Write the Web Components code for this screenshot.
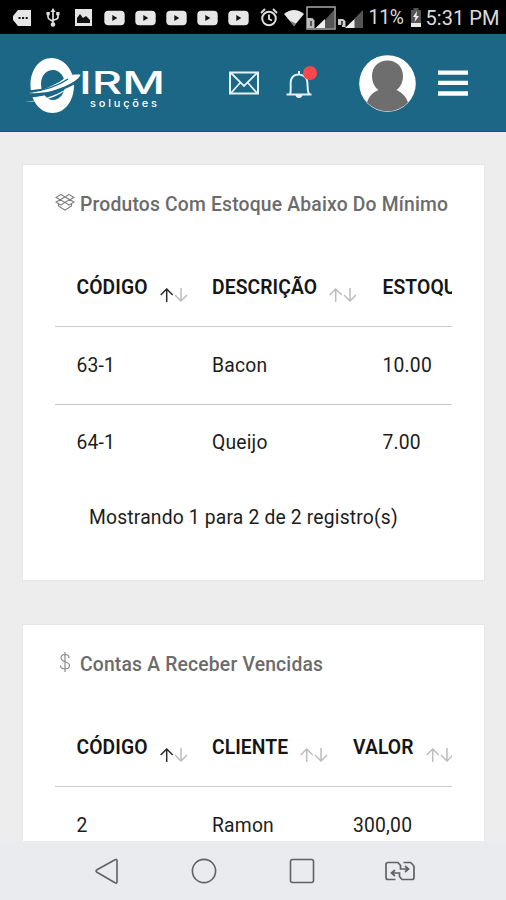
<!DOCTYPE html>
<html lang="pt-BR">
<head>
<meta charset="utf-8">
<title>IRM Soluções</title>
<style>
html,body{margin:0;height:100%}
body{background:#ededed;overflow:hidden;font-family:Roboto,"Liberation Sans",sans-serif;color:#1c1c1c}
</style>
</head>
<body>
<irm-app></irm-app>
<script>
const define=(name,html,setup)=>customElements.define(name,class extends HTMLElement{
  connectedCallback(){
    if(this.shadowRoot)return;
    const t=document.createElement('template');
    t.innerHTML=html;
    this.attachShadow({mode:'open'}).append(t.content.cloneNode(true));
    if(setup)setup(this,this.shadowRoot);
  }
});

const video='<svg width="21" height="16" viewBox="0 0 21 16"><rect x=".3" y=".8" width="20.4" height="14.4" rx="4" fill="#e6e6e6"/><path d="M8.3 5v6l5-3z" fill="#111"/></svg>';
define('status-bar',`<style>
:host{display:flex;align-items:center;height:34px;background:#000;color:#dcdcdc;box-sizing:border-box;padding:1px 0 0 13px;font-size:20px;white-space:nowrap}
svg{display:block;flex:none}
.videos{display:flex;gap:9.9px;margin-left:12px}
.pct{margin-left:6px;width:41px;font-size:19.3px;letter-spacing:-.2px}
.time{margin-left:4px;letter-spacing:.05px}
</style>
<svg width="18" height="16" viewBox="0 0 18 16"><path d="M5 0h13v16H5L0 10V6z" fill="#e6e6e6"/><path d="M5.500 7h2v2h-2zm3.600 0h2v2h-2zm3.600 0h2v2h-2z" fill="#111"/></svg>
<svg style="margin-left:15px" width="14" height="19" viewBox="0 0 14 19" fill="none" stroke="#ddd" stroke-width="1.700"><path d="M7 2v14M2 5v4c0 3 3 2.500 5 4.500M12 5v4c0 3-3 2-5 3.500"/><path d="M4.500 4L7 0l2.500 4zM.5 4h3.300v3.300H.5zM10.200 4h3.300v3.300h-3.300z" fill="#ddd" stroke="none"/><circle cx="7" cy="16.500" r="1.500" fill="#ddd"/></svg>
<svg style="margin-left:15px" width="17" height="17" viewBox="0 0 17 17"><path d="M0 0h17v17H0z" fill="#e6e6e6"/><path d="M2 14V9l3-4 3 4 3-2 4 4v3z" fill="#111"/></svg>
<div class="videos">${video.repeat(5)}</div>
<svg style="margin-left:11px" width="18" height="19" viewBox="0 0 18 19" fill="none" stroke="#ddd"><circle cx="9" cy="10.500" r="6.800" stroke-width="2"/><path d="M9 6.500v4.500l3 1.500M1 5l4-4M17 5l-4-4" stroke-width="1.900"/></svg>
<svg style="margin-left:6px" width="20" height="16" viewBox="0 0 20 16"><path d="M0 4Q10-4 20 4L10 16z" fill="#e9e9e9"/><path d="M5.500 10.500L10 16l2-2.500z" fill="#777"/></svg>
<svg style="margin-left:2px" width="30" height="24" viewBox="0 0 30 24"><path d="M1 1h28v22H1z" fill="none" stroke="#a9a9a9" stroke-width="1.500"/><path d="M1 12h5.500l2 2.500V22H1z" fill="#bbb"/><path d="M5 15v5" stroke="#333" stroke-width="1.500"/><path d="M28 4v18h-9V14z" fill="#555"/><path d="M9.500 22l9.500-9v9z" fill="#eee"/></svg>
<svg style="margin-left:2px;margin-right:-2px" width="27" height="24" viewBox="0 0 27 24"><path d="M0 13h5l2.500 2V21H4v-2H0z" fill="#ccc"/><path d="M4 15v4" stroke="#222" stroke-width="1.500"/><path d="M25 4v18h-9V13z" fill="#555"/><path d="M7 22l9.500-9v9z" fill="#eee"/></svg>
<span class="pct">11%</span>
<svg width="12" height="19" viewBox="0 0 12 19"><path d="M3.500 0h5v2H11v17H1V2h2.500z" fill="#555"/><path d="M1 15h10v4H1z" fill="#e8e8e8"/><path d="M7 3L3 9h2.500L4.500 14 9 8H6.500z" fill="#eee"/></svg>
<span class="time">5:31 PM</span>`);

define('irm-logo',`<style>:host{display:block;width:142px;height:58px}svg{display:block}text{fill:#fff}</style>
<svg width="142" height="58" viewBox="24 56 142 58">
<path fill-rule="evenodd" fill="#fff" d="M51.500 58C63 58 74 69 74 85S65 113 52.500 113 30.500 101 30.500 85 40 58 51.500 58zM53 70c-7 0-12 6-12 14s5 16 12 16 12-7 12-15-5-15-12-15z"/>
<path d="M28 94C44 93 63 88 80 77" fill="none" stroke="#1b6785" stroke-width="7"/>
<path fill="#fff" d="M29 93C41 91 59 84 66 77c5-3 10-2.500 14.500-2.500-1 3-4 6-11 9.500C56 91 42 94 29 93z"/>
<path d="M31 92C45 90 58 86 68 79" fill="none" stroke="#1b6785" stroke-width="1.500"/>
<path fill="#fff" d="M24 102c14-1 32-6 44-14-9 9-27 14-44 14z"/>
<text x="79" y="94" font-family="Inter,sans-serif" font-size="31.500" font-weight="500" textLength="86" lengthAdjust="spacingAndGlyphs">IRM</text>
<text x="90" y="107" font-family="Inter,sans-serif" font-size="11" font-weight="500" textLength="67" lengthAdjust="spacing">soluções</text>
</svg>`);

define('app-header',`<style>
:host{display:flex;align-items:flex-start;height:98px;background:#1b6785;box-sizing:border-box;padding-left:24px;border-bottom:1.5px solid #125474}
svg{display:block;flex:none}
irm-logo{margin-top:22px;flex:none}
.bell{position:relative;margin:36px 0 0 27px}
.dot{position:absolute;left:17px;top:-4px;width:14px;height:14px;border-radius:50%;background:#fb474b}
</style>
<irm-logo></irm-logo>
<svg style="margin:37px 0 0 63px" width="30" height="24" viewBox="0 0 30 24" fill="none" stroke="#e3f2f5" stroke-width="2"><path d="M1 1.500h28v21H1z"/><path d="M2 2l13 13L28 2M2 22l9-10M28 22l-9-10" stroke-width="1.800"/></svg>
<div class="bell"><svg width="26" height="28" viewBox="0 0 26 28" fill="none" stroke="#e3f2f5" stroke-width="2"><path d="M.5 24.500h25M4 24c1.500-3 0-10 1-14 1-3.500 4-5.500 7.500-5.500S20 6.500 21 10c1 4 0 11 2 14M13 4V1"/><path d="M9.500 25h7Q16 28 13 28t-3.500-3z" fill="#e3f2f5" stroke="none"/></svg><span class="dot"></span></div>
<svg style="margin:21px 0 0 47px" width="57" height="57" viewBox="0 0 57 57"><circle cx="28.500" cy="28.500" r="28.300" fill="#fff"/><path fill="#6e6e6e" d="M28.500 5.500C38 5.500 44 12.500 44 21c0 6-2.500 11-6.500 14 5.500 2.500 9.500 6.500 11.500 12.500A28.300 28.300 0 0 1 8 47.500C10 41 14 37.500 19.500 35 15.500 32 13 27 13 21 13 12.500 19 5.500 28.500 5.500z"/></svg>
<svg style="margin:36px 0 0 22px" width="30" height="27" viewBox="0 0 30 27" fill="#fff"><path d="M0 .5h30v4.300H0zm0 10.300h30v4.300H0zM0 21.200h30v4.600H0z"/></svg>`);

define('sort-arrows',`<style>:host{display:block;width:28px;height:14px;margin:14px 0 0 12px;flex:none}svg{display:block}</style>
<svg width="28" height="14" viewBox="0 0 28 14" fill="none" stroke-width="1.500"><path class="up" d="M6.700 14V1M.700 7l6-6 6 6" stroke="#bdbdbd"/><path d="M21 0v13M15 7l6 6 6-6" stroke="#bdbdbd"/></svg>`,
(el,root)=>{if(el.hasAttribute('active'))root.querySelector('.up').setAttribute('stroke','#2a2a2a')});

define('panel-card',`<style>
:host{display:block;margin:0 21px 43px 22px;border:1px solid #e6e6e6;background:#fff;padding:0 32px;box-sizing:border-box;height:417px}
h2{display:flex;align-items:center;margin:0;padding-top:26px;height:27px;font-size:19.300px;line-height:27px;font-weight:500;color:#6b6b6b;white-space:nowrap;letter-spacing:.2px}
.icon{width:25px;flex:none;margin-top:-5px}
.body{margin-top:32px;overflow:hidden}
</style>
<h2><span class="icon"><slot name="icon"></slot></span><slot name="title"></slot></h2>
<div class="body"><slot></slot></div>`);

define('data-row',`<style>
:host{display:grid;grid-template-columns:var(--cols);height:76.500px;border-bottom:1.500px solid #cacaca;padding-left:21.500px;align-items:center;font-size:19.300px;white-space:nowrap;letter-spacing:.2px}
:host([last]){border-bottom:0}
:host([head]){height:76px;font-weight:600;color:#161616;letter-spacing:.1px}
</style><slot></slot>`);

define('head-cell',`<style>:host{display:flex;align-items:center;height:24px;margin-top:-1px}</style><slot></slot><sort-arrows></sort-arrows>`,
(el,root)=>{if(el.hasAttribute('active')){const old=root.querySelector('sort-arrows');const a=document.createElement('sort-arrows');a.setAttribute('active','');old.replaceWith(a)}});

define('nav-bar',`<style>
:host{display:grid;grid-template-columns:1fr 1fr 1fr 1fr;justify-items:center;align-items:center;height:59px;flex:none;background:#e9ebee;padding:0 57.500px 0 58px;box-sizing:border-box}
svg{display:block}
</style>
<svg width="24" height="26" viewBox="0 0 24 26" fill="none" stroke="#606266" stroke-width="1.600" stroke-linejoin="round"><path d="M2 11.800L20 1.800q2-1 2 1v21q0 2-2 1L2 14.200q-2-1.200 0-2.400z"/></svg>
<svg width="26" height="26" viewBox="0 0 26 26" fill="none" stroke="#606266" stroke-width="1.600"><circle cx="13" cy="13" r="11.600"/></svg>
<svg width="26" height="26" viewBox="0 0 26 26" fill="none" stroke="#606266" stroke-width="1.600"><rect x="1.500" y="1.500" width="23" height="23" rx="2"/></svg>
<svg width="30" height="20" viewBox="0 0 30 20" fill="none" stroke="#606266" stroke-width="1.700"><path d="M10.500 18.500H3q-2 0-2-2v-13q0-2 2-2h10l2.500 3V8H23M20 5l3.500 3-3.500 3M18.500 1.500H25q1.500 0 4 4v11q0 2-2 2H17l-2.500-3V12H7M10 9l-3.500 3 3.500 3"/></svg>`);

define('irm-app',`<style>
:host{display:flex;flex-direction:column;width:506px;height:900px;overflow:hidden}
main{flex:1;min-height:0;overflow:hidden;padding-top:32px;box-sizing:border-box;background:linear-gradient(#f2f2f4,#ededed 2px)}
status-bar,app-header{flex:none}
.total{margin:19px 0 0 34px;font-size:19.300px;line-height:36px;letter-spacing:.18px;white-space:nowrap}
svg{display:block}
</style>
<status-bar></status-bar>
<app-header></app-header>
<main>
<panel-card style="--cols:135.500px 170.500px 180px">
<svg slot="icon" width="20" height="18" viewBox="0 0 20 20" preserveAspectRatio="none" fill="none" stroke="#7c7c7c" stroke-width="1.150"><path d="M6 1.500L1 5l9 5.500L19 5l-5-3.500-4 3zM10 4.500l-9 5.500 5 3.500 4-3 4 3 5-3.500-9-5.500M3.500 12.500v2L10 19l6.500-4.500v-2"/></svg>
<span slot="title">Produtos Com Estoque Abaixo Do Mínimo</span>
<data-row head><head-cell active>CÓDIGO</head-cell><head-cell>DESCRIÇÃO</head-cell><head-cell>ESTOQUE</head-cell></data-row>
<data-row><span>63-1</span><span>Bacon</span><span>10.00</span></data-row>
<data-row last><span>64-1</span><span>Queijo</span><span>7.00</span></data-row>
<div class="total">Mostrando 1 para 2 de 2 registro(s)</div>
</panel-card>
<panel-card style="--cols:135.500px 141px 180px">
<svg slot="icon" width="20" height="20" viewBox="0 0 20 20" fill="none" stroke="#888" stroke-width="1.150"><path d="M14 6c0-2-1.500-3.500-4-3.500S6 4 6 6c0 4.500 8.500 3 8.500 7.500 0 2-1.800 3.500-4.500 3.500s-4.500-1.500-4.500-3.500M10 0v20"/></svg>
<span slot="title">Contas A Receber Vencidas</span>
<data-row head><head-cell active>CÓDIGO</head-cell><head-cell>CLIENTE</head-cell><head-cell>VALOR</head-cell></data-row>
<data-row last><span>2</span><span>Ramon</span><span>300,00</span></data-row>
</panel-card>
</main>
<nav-bar></nav-bar>`);
</script>
</body>
</html>
